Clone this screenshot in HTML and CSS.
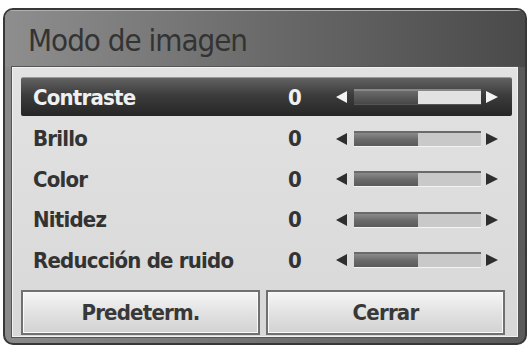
FILE: index.html
```html
<!DOCTYPE html>
<html lang="es">
<head>
  <meta charset="UTF-8">
  <title>Modo de imagen</title>
  <link rel="stylesheet" href="styles.css">
</head>
<body>
<div class="dialog">
  <div class="title">Modo de imagen</div>
  <div class="panel">
    <div class="rows">
      <div class="row active">
        <span class="label">Contraste</span><span class="value">0</span>
        <span class="slider"><span class="arrow left"></span><span class="track"><span class="fill" style="width:50%"></span></span><span class="arrow right"></span></span>
      </div>
      <div class="row">
        <span class="label">Brillo</span><span class="value">0</span>
        <span class="slider"><span class="arrow left"></span><span class="track"><span class="fill" style="width:50%"></span></span><span class="arrow right"></span></span>
      </div>
      <div class="row">
        <span class="label">Color</span><span class="value">0</span>
        <span class="slider"><span class="arrow left"></span><span class="track"><span class="fill" style="width:50%"></span></span><span class="arrow right"></span></span>
      </div>
      <div class="row">
        <span class="label">Nitidez</span><span class="value">0</span>
        <span class="slider"><span class="arrow left"></span><span class="track"><span class="fill" style="width:50%"></span></span><span class="arrow right"></span></span>
      </div>
      <div class="row">
        <span class="label">Reducción de ruido</span><span class="value">0</span>
        <span class="slider"><span class="arrow left"></span><span class="track"><span class="fill" style="width:50%"></span></span><span class="arrow right"></span></span>
      </div>
    </div>
    <div class="buttons">
      <div class="btn">Predeterm.</div>
      <div class="btn">Cerrar</div>
    </div>
  </div>
</div>
</body>
</html>
```

FILE: styles.css
```css
body {
  margin: 0;
  background: #fff;
  font-family: "DejaVu Sans Condensed", "DejaVu Sans", sans-serif;
}
.dialog {
  margin: 8px 2px 0 3px;
  height: 337px;
  box-sizing: border-box;
  border: 2px solid #383838;
  border-radius: 10px;
  background: linear-gradient(to right, #8a8a8a, #5a5a5a);
  display: flex;
  flex-direction: column;
  overflow: hidden;
}
.title {
  height: 57px;
  box-sizing: border-box;
  padding: 11px 0 0 23px;
  font-size: 31px;
  letter-spacing: -1px;
  color: #333;
  background: linear-gradient(to right, #8e8e8e, #6a6a6a 50%, #4a4a4a);
  border-top: 1px solid #b0b0b0;
}
.panel {
  flex: 1;
  margin: 0 7px 6px 7px;
  border: 1px solid #f2f2f2;
  box-shadow: 0 0 0 1px #555;
  background: linear-gradient(#e2e2e2, #d8d8d8);
  padding: 9px 5px 0 8px;
  display: flex;
  flex-direction: column;
}
.rows {
  display: flex;
  flex-direction: column;
}
.row {
  height: 40.5px;
  display: flex;
  align-items: center;
  font-weight: bold;
  font-size: 22px;
  letter-spacing: -0.8px;
  color: #333;
}
.row.active {
  height: 38px;
  margin-bottom: 2.5px;
  color: #f0f0f0;
  border-top: 1px solid #9a9a9a;
  background: linear-gradient(#626262, #3c3c3c 45%, #262626);
  border-radius: 2px;
}
.label {
  width: 255px;
  padding-left: 12px;
}
.value {
  width: 48px;
}
.slider {
  display: flex;
  align-items: center;
}
.arrow {
  width: 0;
  height: 0;
  border-top: 6px solid transparent;
  border-bottom: 6px solid transparent;
}
.arrow.left {
  border-right: 11px solid #2e2e2e;
  margin-right: 7px;
}
.arrow.right {
  border-left: 12px solid #2e2e2e;
  margin-left: 5px;
}
.row.active .arrow.left { border-right-color: #f4f4f4; }
.row.active .arrow.right { border-left-color: #f4f4f4; }
.track {
  width: 127px;
  height: 16px;
  box-sizing: border-box;
  border-top: 2px solid #6a6a6a;
  border-bottom: 1px solid #f4f4f4;
  background: #c9c9c9;
  display: flex;
}
.fill {
  background: linear-gradient(#8a8a8a, #6a6a6a 50%, #5a5a5a);
}
.row.active .track {
  border-top-color: #888;
  border-bottom-color: #555;
  background: #e2e2e2;
}
.row.active .fill {
  background: linear-gradient(#6a6a6a, #474747);
}
.buttons {
  margin-top: 9px;
  margin-right: 7px;
  display: flex;
  gap: 6px;
}
.btn {
  flex: 1;
  height: 45px;
  box-sizing: border-box;
  border: 2px solid #707070;
  box-shadow: inset 0 0 0 1px #fafafa;
  background: linear-gradient(#f6f6f6, #e2e2e2 50%, #d2d2d2);
  display: flex;
  align-items: center;
  justify-content: center;
  font-weight: bold;
  font-size: 22px;
  letter-spacing: -0.8px;
  color: #383838;
}
```
